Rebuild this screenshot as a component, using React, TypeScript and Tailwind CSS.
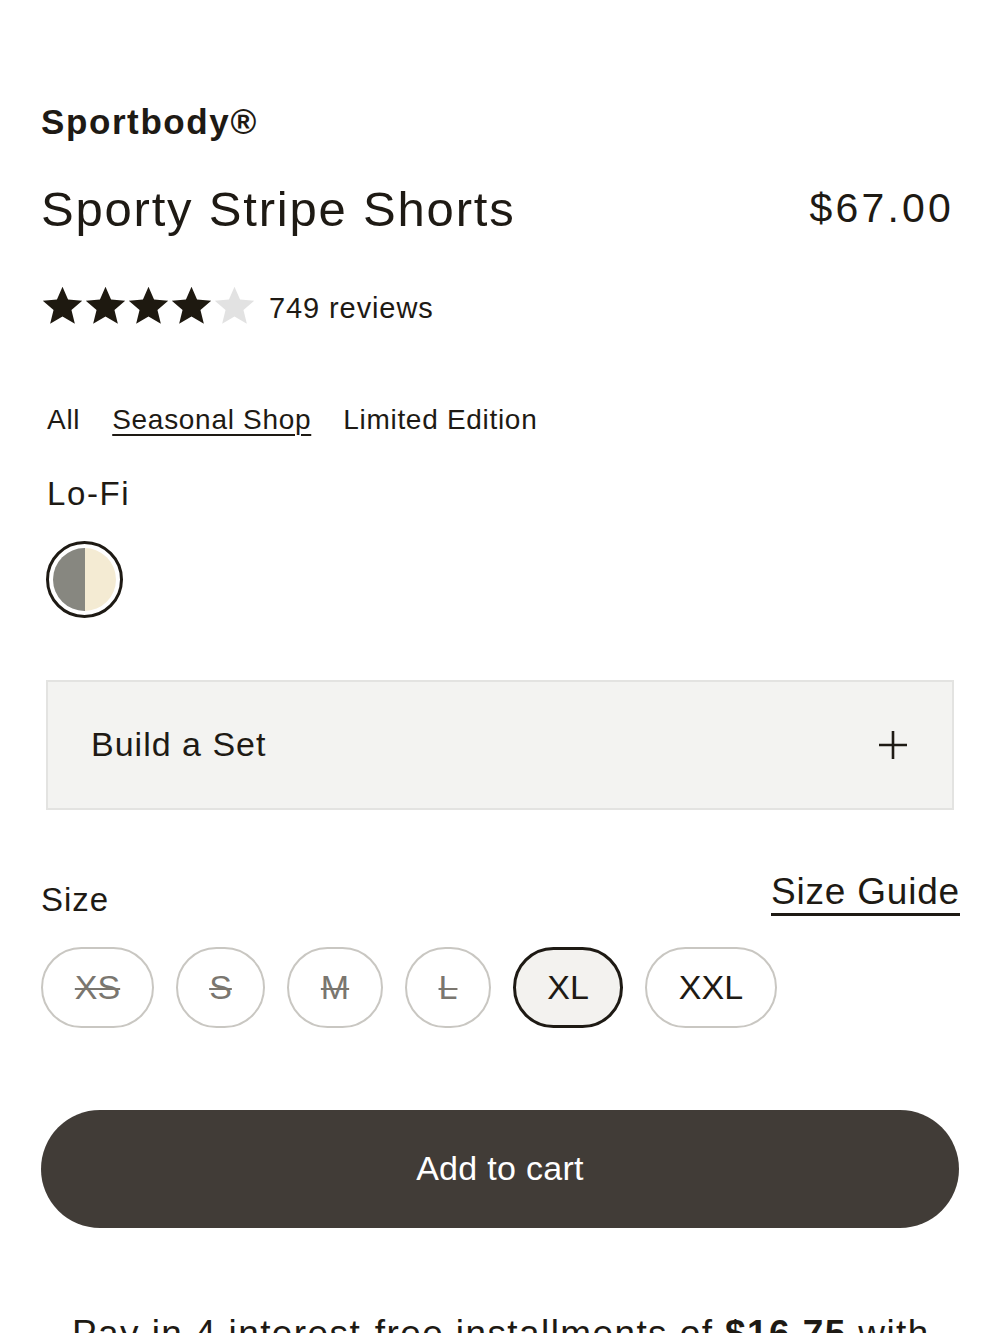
const SIZES = [
  { label: 'XS', width: 'w-[113px]', disabled: true },
  { label: 'S', width: 'w-[89px]', disabled: true },
  { label: 'M', width: 'w-[96px]', disabled: true },
  { label: 'L', width: 'w-[86px]', disabled: true },
  { label: 'XL', width: 'w-[110px]', selected: true },
  { label: 'XXL', width: 'w-[132px]' },
];

const Star = ({ filled }: { filled: boolean }) => (
  <svg className="h-[43px] w-[43px]" viewBox="0 0 24 24">
    <path
      d="M12 1.5l3.1 7.2 7.9.6-6 5.2 1.9 7.7L12 18.1l-6.9 4.1 1.9-7.7-6-5.2 7.9-.6z"
      fill={filled ? '#1e1910' : '#e2e2e2'}
    />
  </svg>
);

export default function App() {
  return (
    <div className="min-h-[1333px] overflow-hidden bg-white px-[41px] pt-[100px] font-['Liberation_Sans',Arial,sans-serif] text-[#1e1a14]">
      <div className="text-[35px] font-bold leading-[44px] tracking-[1.6px]">Sportbody®</div>

      <div className="mt-[35px] flex items-start justify-between">
        <h1 className="text-[49px] leading-[60px] tracking-[1.8px]">Sporty Stripe Shorts</h1>
        <div className="mt-[1px] pr-[5px] text-[41px] leading-[56px] tracking-[3.2px]">$67.00</div>
      </div>

      <div className="mt-[42px] flex items-center">
        <div className="flex">
          {[0, 1, 2, 3, 4].map((i) => (
            <Star key={i} filled={i < 4} />
          ))}
        </div>
        <span className="ml-[13px] mt-[6px] text-[29px] tracking-[0.9px]">749 reviews</span>
      </div>

      <div className="mt-[69px] flex gap-[32px] pl-[6px] text-[28px] leading-[40px] tracking-[0.7px]">
        <span>All</span>
        <span className="underline decoration-2 underline-offset-[5px]">Seasonal Shop</span>
        <span>Limited Edition</span>
      </div>

      <div className="mt-[34px] pl-[6px] text-[33px] leading-[40px] tracking-[1.6px]">Lo-Fi</div>

      <div className="ml-[5px] mt-[27px] flex h-[77px] w-[77px] items-center justify-center rounded-full border-[3px] border-[#1e1a14]">
        <div className="flex h-[63px] w-[63px] overflow-hidden rounded-full">
          <div className="w-1/2 bg-[#878780]" />
          <div className="w-1/2 bg-[#f4ebd3]" />
        </div>
      </div>

      <div className="ml-[5px] mr-[5px] mt-[62px] flex h-[130px] items-center justify-between border-2 border-[#e3e3e1] bg-[#f3f3f1] pl-[43px] pr-[44px]">
        <span className="text-[34px] tracking-[1px]">Build a Set</span>
        <svg className="h-[30px] w-[30px]" viewBox="0 0 30 30">
          <path d="M15 1v28M1 15h28" stroke="#1e1a14" strokeWidth="2.6" />
        </svg>
      </div>

      <div className="mt-[62px] flex items-end justify-between">
        <span className="mb-[-4px] text-[33px] leading-[40px] tracking-[1px]">Size</span>
        <span className="mr-[-1px] border-b-[3px] border-[#1e1a14] pb-[1px] text-[37px] leading-[40px] tracking-[0.8px]">Size Guide</span>
      </div>

      <div className="mt-[31px] flex gap-[22px]">
        {SIZES.map((s) => (
          <div
            key={s.label}
            className={`flex h-[81px] items-center justify-center rounded-full text-[34px] ${s.width} ${
              s.selected
                ? 'border-[3px] border-[#1e1a14] bg-[#f3f2ef]'
                : 'border-2 border-[#c9c7c2] bg-white'
            } ${s.disabled ? 'text-[#7a766f] line-through decoration-2' : ''}`}
          >
            {s.label}
          </div>
        ))}
      </div>

      <button
        className="mt-[82px] flex h-[118px] w-full items-center justify-center rounded-full bg-[#413c37] text-[34px] tracking-[0.3px] text-white"
        type="button"
      >
        Add to cart
      </button>

      <p className="mt-[84px] whitespace-nowrap pl-[31px] text-[37px] leading-[44px] tracking-[1.4px]">
        Pay in 4 interest-free installments of <span className="font-bold">$16.75</span> with
      </p>
    </div>
  );
}
